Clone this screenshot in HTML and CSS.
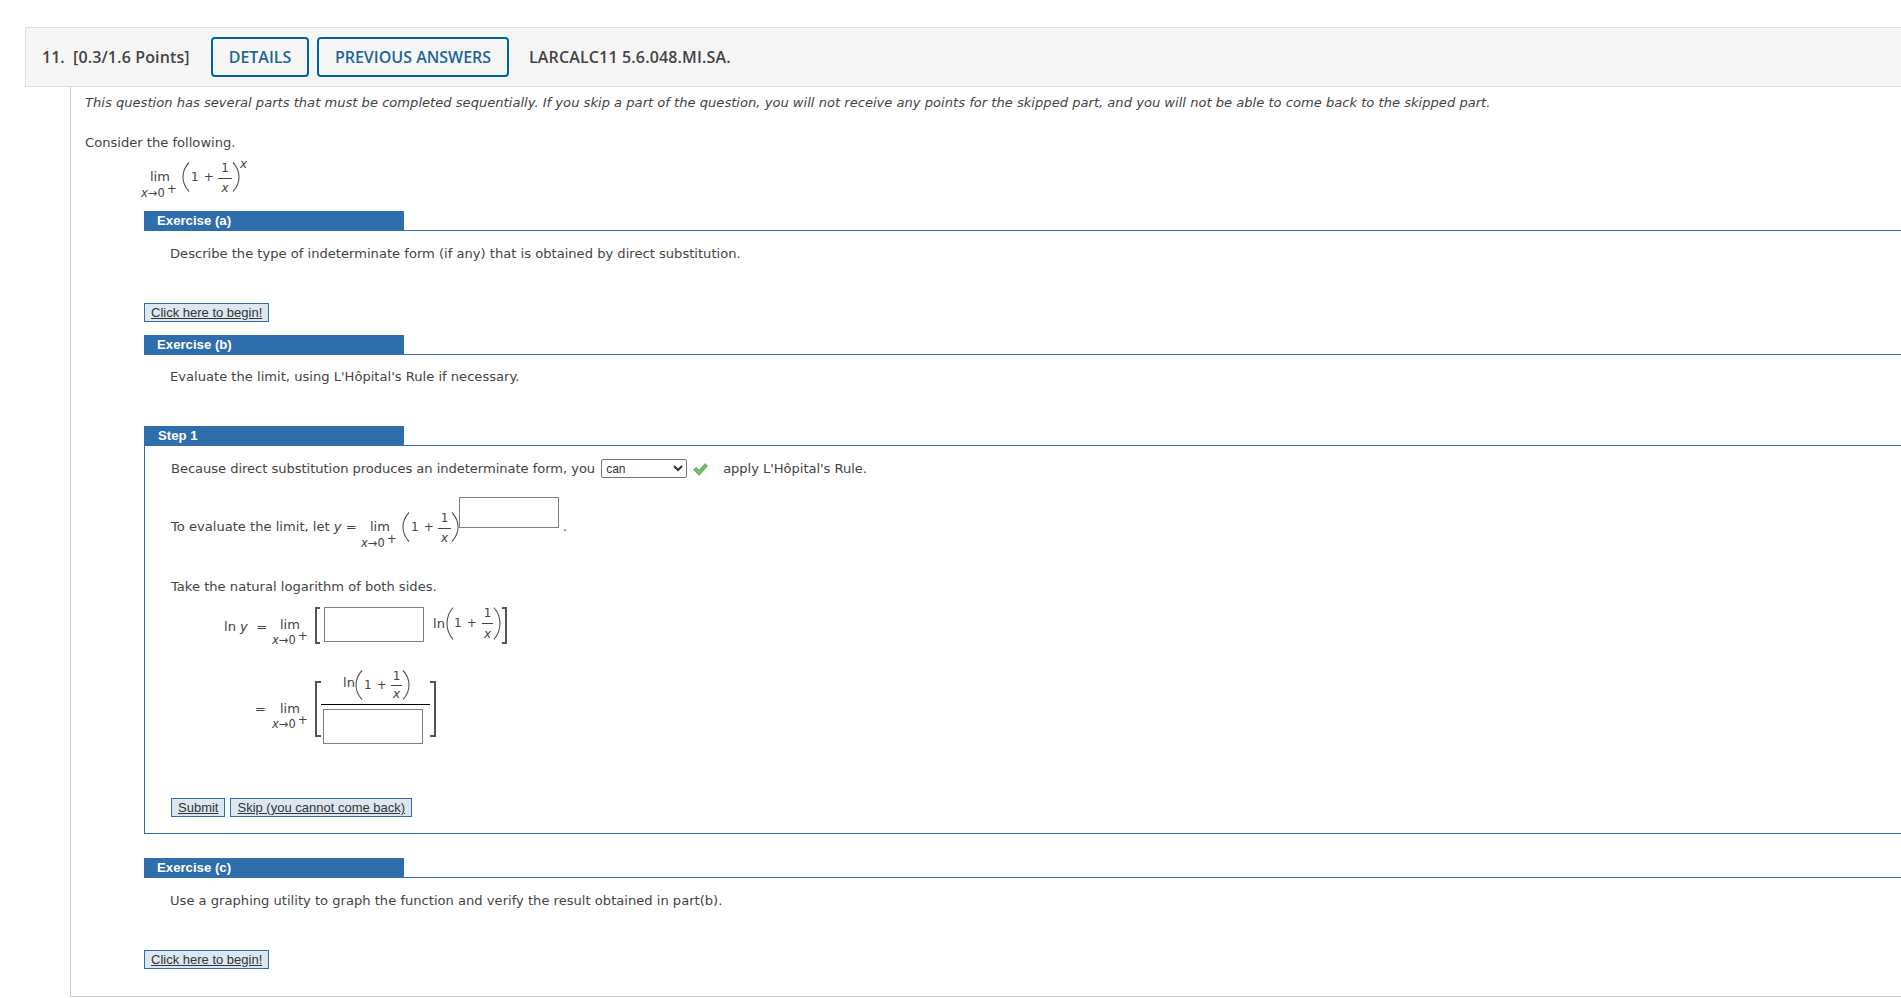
FILE: index.html
```html
<!DOCTYPE html>
<html lang="en">
<head>
<meta charset="utf-8">
<title>Question 11</title>
<link rel="stylesheet" href="styles.css">
</head>
<body>
<header class="qhead">
  <span class="qnum">11.</span>
  <span class="qpoints">[0.3/1.6 Points]</span>
  <a class="qbtn qbtn-details">DETAILS</a>
  <a class="qbtn qbtn-prev">PREVIOUS ANSWERS</a>
  <span class="qcode">LARCALC11 5.6.048.MI.SA.</span>
</header>
<main class="qbody">
  <p class="text note">This question has several parts that must be completed sequentially. If you skip a part of the question, you will not receive any points for the skipped part, and you will not be able to come back to the skipped part.</p>
  <p class="text consider">Consider the following.</p>
  <div class="math math-intro">
    <div class="limit"><span class="lim">lim</span><span class="under"><i>x</i>→0<span class="plus">+</span></span></div>
    <svg class="paren" viewBox="0 0 8 30"><path d="M7 0.5C-1 9 -1 21 7 29.5"/></svg>
    <span class="sum">1&nbsp;&nbsp;+</span>
    <div class="frac"><span>1</span><i>x</i></div>
    <svg class="paren" viewBox="0 0 8 30"><path d="M1 0.5C9 9 9 21 1 29.5"/></svg>
    <i class="power">x</i>
  </div>

  <section class="part part-a">
    <div class="bar"><h2 class="bar-label">Exercise (a)</h2></div>
    <p class="text prompt">Describe the type of indeterminate form (if any) that is obtained by direct substitution.</p>
    <a class="btn btn-begin">Click here to begin!</a>
  </section>

  <section class="part part-b">
    <div class="bar"><h2 class="bar-label">Exercise (b)</h2></div>
    <p class="text prompt prompt-b">Evaluate the limit, using L'Hôpital's Rule if necessary.</p>
  </section>

  <section class="part step">
    <div class="bar"><h2 class="bar-label bar-label-step">Step 1</h2></div>
    <div class="step-box">
      <div class="line-select">
        <span class="text text-tight">Because direct substitution produces an indeterminate form, you</span>
        <select class="choice"><option>can</option><option>cannot</option></select>
        <svg class="check" viewBox="0 0 15 13"><path d="M0.6 6.8L3 4.3L6 7.2L12.2 0.6L14.5 3L6.1 12.4Z"/></svg>
        <span class="text text-tight">apply L'Hôpital's Rule.</span>
      </div>
      <div class="line-eval">
        <span class="text eval-label">To evaluate the limit, let <i>y</i> =</span>
        <div class="math math-eval">
          <div class="limit"><span class="lim">lim</span><span class="under"><i>x</i>→0<span class="plus">+</span></span></div>
          <svg class="paren" viewBox="0 0 8 30"><path d="M7 0.5C-1 9 -1 21 7 29.5"/></svg>
          <span class="sum">1&nbsp;&nbsp;+</span>
          <div class="frac"><span>1</span><i>x</i></div>
          <svg class="paren" viewBox="0 0 8 30"><path d="M1 0.5C9 9 9 21 1 29.5"/></svg>
        </div>
        <input class="answer answer-power" type="text" aria-label="exponent">
        <span class="text eval-dot">.</span>
      </div>
      <p class="text take">Take the natural logarithm of both sides.</p>
      <div class="line-log">
        <span class="text log-label">ln <i>y</i> &nbsp;=</span>
        <div class="limit limit-log"><span class="lim">lim</span><span class="under"><i>x</i>→0<span class="plus">+</span></span></div>
        <span class="bracket bracket-l"></span>
        <input class="answer answer-log" type="text" aria-label="factor">
        <span class="text ln">ln</span>
        <svg class="paren paren-log" viewBox="0 0 8 30" preserveAspectRatio="none"><path d="M7 0.5C-1 9 -1 21 7 29.5"/></svg>
        <span class="sum">1&nbsp;&nbsp;+</span>
        <div class="frac frac-log"><span>1</span><i>x</i></div>
        <svg class="paren paren-log" viewBox="0 0 8 30" preserveAspectRatio="none"><path d="M1 0.5C9 9 9 21 1 29.5"/></svg>
        <span class="bracket bracket-r"></span>
      </div>
      <div class="line-ratio">
        <span class="text ratio-eq">=</span>
        <div class="limit limit-ratio"><span class="lim">lim</span><span class="under"><i>x</i>→0<span class="plus">+</span></span></div>
        <span class="bracket bracket-l bracket-tall"></span>
        <div class="ratio">
          <div class="ratio-top">
            <span class="text ln">ln</span>
            <svg class="paren" viewBox="0 0 8 30"><path d="M7 0.5C-1 9 -1 21 7 29.5"/></svg>
            <span class="sum">1&nbsp;&nbsp;+</span>
            <div class="frac frac-small"><span>1</span><i>x</i></div>
            <svg class="paren" viewBox="0 0 8 30"><path d="M1 0.5C9 9 9 21 1 29.5"/></svg>
          </div>
          <input class="answer answer-ratio" type="text" aria-label="denominator">
        </div>
        <span class="bracket bracket-r bracket-tall"></span>
      </div>
      <div class="actions">
        <a class="btn">Submit</a>
        <a class="btn">Skip (you cannot come back)</a>
      </div>
    </div>
  </section>

  <section class="part part-c">
    <div class="bar"><h2 class="bar-label">Exercise (c)</h2></div>
    <p class="text prompt">Use a graphing utility to graph the function and verify the result obtained in part(b).</p>
    <a class="btn btn-begin btn-begin-c">Click here to begin!</a>
  </section>
</main>
</body>
</html>
```

FILE: styles.css
```css
* { box-sizing: border-box; }
html, body { margin: 0; padding: 0; background: #fff; }
body { padding-top: 27px; height: 998px; overflow: hidden; font-family: "DejaVu Sans", Verdana, sans-serif; color: #444; }

.qhead {
  display: flex; align-items: center; height: 60px; margin-left: 25px;
  background: #f6f6f6; border: 1px solid #ddd; border-right: 0;
  border-radius: 2px 0 0 2px;
  font-family: "Open Sans", sans-serif; font-size: 16px; font-weight: 600; color: #444;
}
.qnum { margin-left: 16px; width: 31px; }
.qpoints { width: 138px; letter-spacing: 0.13px; }
.qbtn {
  display: flex; align-items: center; justify-content: center; height: 40px;
  border: 2px solid #00659c; border-radius: 4px; color: #1d6697; font-weight: 600;
}
.qbtn-details { width: 98px; }
.qbtn-prev { width: 192px; margin-left: 8px; }
.qcode { margin-left: 20px; letter-spacing: 0.15px; }

.qbody {
  margin-left: 70px; height: 910px; padding-left: 14px;
  border-left: 1px solid #ccc; border-bottom: 1px solid #ccc;
}
.text { font-size: 13.1px; line-height: 14px; margin: 0; color: #444; }
.text-tight { letter-spacing: -0.05px; }
.note { font-style: italic; padding-top: 9px; }
.consider { margin-top: 26px; }

.part { margin-left: 59px; }
.math { display: flex; align-items: flex-start; font-size: 12px; color: #444; }
.math-intro { margin-left: 56px; margin-top: 12px; height: 49px; }
.limit { display: flex; flex-direction: column; width: 41px; color: #444; padding-top: 7px; flex: none; }
.lim { line-height: 16px; padding-left: 9px; font-size: 13px; }
.under { display: flex; height: 14px; align-items: center; font-size: 11.5px; margin-top: 1px; white-space: nowrap; }
.plus { font-size: 12px; margin: -8px 0 0 2px; }
.paren { width: 8px; height: 30px; flex: none; }
.paren path { fill: none; stroke: #555; stroke-width: 1.1; }
.sum { font-size: 12px; line-height: 30px; margin-left: 1px; width: 27px; white-space: nowrap; flex: none; word-spacing: -1.2px; }
.frac {
  display: flex; flex-direction: column; align-items: center; justify-content: space-between; width: 14px; height: 32px; flex: none;
  background: linear-gradient(#444, #444) center / 100% 1px no-repeat; font-size: 12px; line-height: 12px; text-align: center;
}
.math-eval .frac { width: 13px; }

.power { font-size: 12px; line-height: 12px; margin-top: -4px; }
.bar { height: 20px; border-bottom: 1px solid #2f6eac; }
.bar-label {
  width: 260px; height: 20px; margin: 0; padding-left: 13px; background: #2f6eac; color: #fff;
  font: bold 13.2px/19px "Liberation Sans", Arial, sans-serif;
}
.bar-label-step { padding-left: 14px; }
.prompt { margin: 16px 0 0 26px; }
.prompt-b { margin-top: 15px; }
.btn {
  display: inline-block; height: 19px; padding: 0 6px; background: #dce7f1; border: 1px solid #2f6eac;
  font: 13px/17px "Liberation Sans", Arial, sans-serif; color: #333; text-decoration: underline; white-space: nowrap;
}
.btn-begin { margin-top: 42px; display: block; width: 125px; }
.part-b { margin-top: 13px; }
.step { margin-top: 42px; }
.step-box {
  height: 388px; border-left: 1px solid #2f6eac; border-bottom: 1px solid #2f6eac; padding: 13px 0 0 26px;
}
.line-select { display: flex; align-items: center; height: 19px; }
.choice {
  width: 86px; height: 19px; margin-left: 6px; padding: 0; border: 1px solid #767676; border-radius: 2px; background: #fff;
  font: 12px "Liberation Sans", Arial, sans-serif; color: #333;
}
.check { width: 15px; height: 13px; margin: 2px 15px 0 6px; }
.check path { fill: #74bb6c; stroke: #4f9a4f; stroke-width: 0.7; }

.line-eval { display: flex; align-items: flex-start; margin-top: 19px; height: 52px; }
.eval-label { margin-top: 23px; width: 190px; white-space: nowrap; }
.math-eval { margin-top: 15px; height: 37px; }
.answer { display: block; padding: 0; border: 1px solid #808080; background: #fff; flex: none; }
.answer-power { width: 100px; height: 31px; margin-left: 0; }
.eval-dot { margin: 23px 0 0 4px; }
.take { margin-top: 31px; }

.line-log { display: flex; align-items: flex-start; margin-left: 53px; margin-top: 13px; height: 42px; }
.log-label { margin-top: 13px; width: 48px; white-space: nowrap; }
.limit-log { padding-top: 10px; width: 43px; }
.limit-log .lim, .limit-ratio .lim { padding-left: 8px; }
.limit-log .under, .limit-ratio .under { margin-top: 0; }
.bracket { display: block; width: 5px; height: 37px; border: 2px solid #555; flex: none; }
.bracket-l { border-right: 0; margin-right: 4px; }
.bracket-r { border-left: 0; margin-left: 1px; }
.answer-log { width: 100px; height: 35px; margin-right: 9px; }
.ln { margin-top: 10px; }
.line-log .ln { width: 13px; }
.paren-log { height: 33px; }
.line-log .sum { line-height: 33px; width: 28px; margin-left: 0; }
.frac-log { width: 11px; height: 33px; }

.line-ratio { display: flex; align-items: flex-start; margin-left: 84px; margin-top: 21px; height: 74px; }
.ratio-eq { margin-top: 32px; width: 17px; }
.limit-ratio { padding-top: 31px; width: 43px; }
.bracket-tall { width: 6px; height: 56px; margin-top: 11px; margin-right: 0; margin-left: 0; }
.ratio { width: 109px; display: flex; flex-direction: column; }
.ratio-top {
  display: flex; align-items: flex-start; height: 35px; padding-left: 22px; border-bottom: 1px solid #000;
}
.ratio-top .ln { width: 12px; margin-top: 6px; }
.frac-small { width: 11px; height: 30px; }
.answer-ratio { width: 100px; height: 35px; margin: 4px 0 0 2px; }

.actions { display: flex; gap: 5px; margin-top: 54px; }
.part-c { margin-top: 24px; }
```
